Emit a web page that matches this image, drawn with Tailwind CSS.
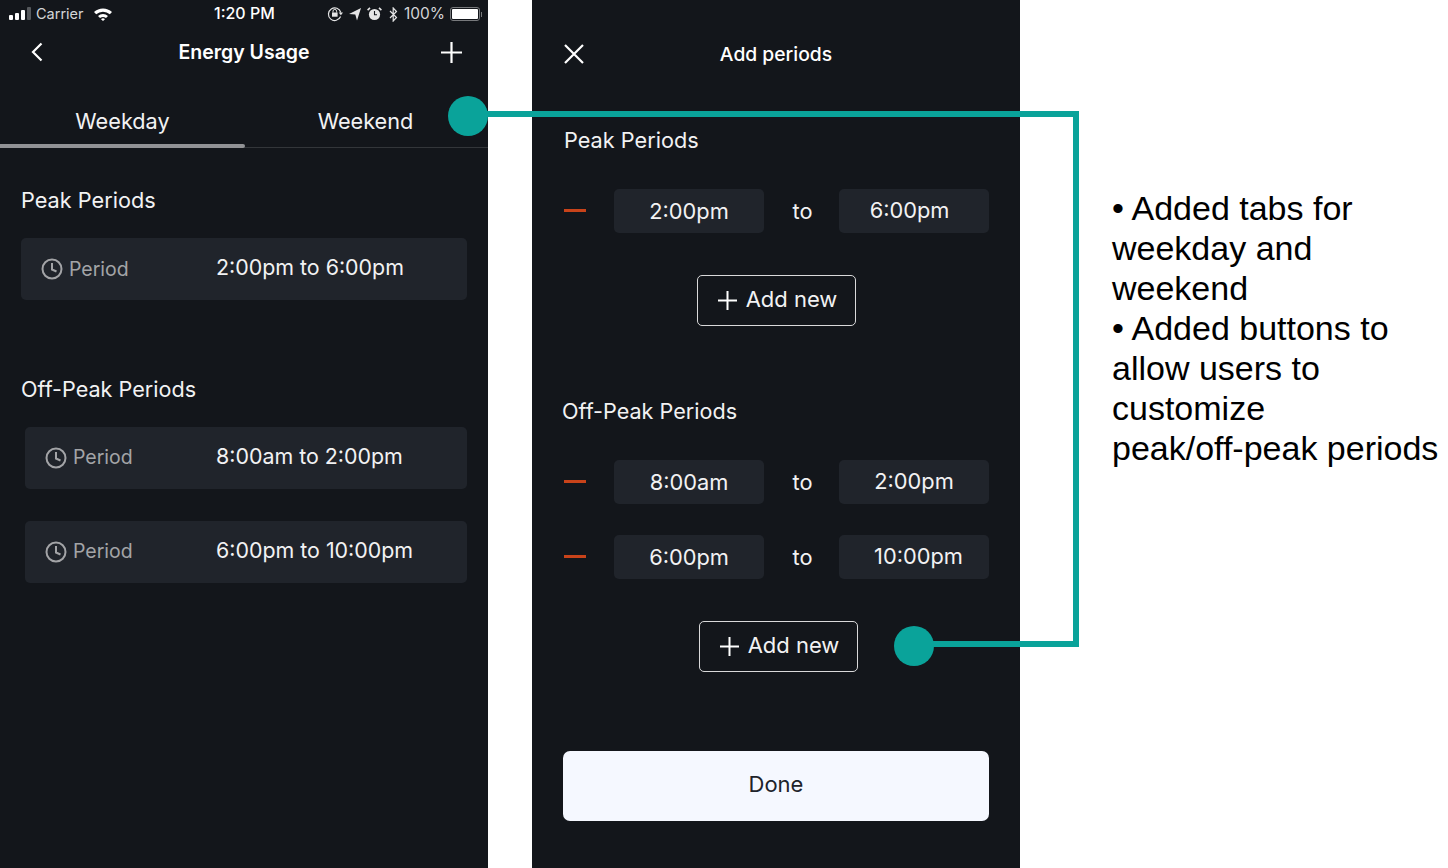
<!DOCTYPE html>
<html lang="en">
<head>
  <meta charset="UTF-8" />
  <title>Energy Usage</title>
  <script src="https://cdn.jsdelivr.net/npm/@tailwindcss/browser@4"></script>
</head>
<body class="bg-white font-['Inter','Liberation_Sans',sans-serif] overflow-hidden">
  <div class="relative w-[1448px] h-[868px] flex">

    <!-- Left phone -->
    <section class="w-[488px] h-[868px] bg-[#13161b] text-white shrink-0">
      <!-- Status bar -->
      <div class="relative h-[28px] flex items-center pl-[9px] pr-[6px] text-[#d4d5d7]">
        <svg width="22" height="14" viewBox="0 0 22 14" class="shrink-0 mr-[5px]">
          <rect x="0" y="8" width="4" height="5" rx="1" fill="#fff"/>
          <rect x="6" y="6" width="4" height="7" rx="1" fill="#fff"/>
          <rect x="12" y="3" width="4" height="10" rx="1" fill="#fff"/>
          <rect x="18" y="0" width="4" height="13" rx="1" fill="#55585c"/>
        </svg>
        <span class="text-[14.5px] leading-none">Carrier</span>
        <svg width="20" height="14" viewBox="0 0 20 14" class="ml-[9px]">
          <path d="M1 5 A13 13 0 0 1 19 5 L16.8 7.3 A10 10 0 0 0 3.2 7.3 Z" fill="#fff"/>
          <path d="M5 9 A7.5 7.5 0 0 1 15 9 L13 11 A5 5 0 0 0 7 11 Z" fill="#fff"/>
          <path d="M8 12.2 A3 3 0 0 1 12 12.2 L10 14 Z" fill="#fff"/>
        </svg>
        <span class="absolute left-[214px] top-[3px] text-[16px] leading-[20px] font-medium text-white">1:20 PM</span>
        <div class="ml-auto flex items-center">
          <svg width="17" height="16" viewBox="0 0 17 16" fill="none" stroke="#e5e5e6" class="mr-[5px]">
            <path d="M13.6 10.5 A6.3 6.3 0 1 1 13.8 6.5" stroke-width="1.2"/>
            <path d="M11.7 6.6 L16 6.6 L13.9 9.2 Z" fill="#e5e5e6" stroke="none"/>
            <rect x="5" y="6.5" width="5.6" height="4.2" fill="#e5e5e6" stroke="none"/>
            <path d="M6 6.5 V5.2 A1.8 1.8 0 0 1 9.6 5.2 V6.5" stroke-width="1"/>
          </svg>
          <svg width="12" height="13" viewBox="0 0 12 13" class="mr-[6px]"><path d="M0 6 L12 0 L8 12.5 L6.3 6.4 Z" fill="#e5e5e6"/></svg>
          <svg width="15" height="14" viewBox="0 0 15 14" class="mr-[7px]">
            <circle cx="7.5" cy="7.5" r="5.6" fill="#e5e5e6"/>
            <path d="M7.5 4 V7.8 H10" stroke="#13161b" stroke-width="1.1" fill="none"/>
            <path d="M0.6 3.2 L3 0.9 M14.4 3.2 L12 0.9" stroke="#e5e5e6" stroke-width="1.6"/>
          </svg>
          <svg width="9" height="15" viewBox="0 0 9 15" fill="none" stroke="#e5e5e6" stroke-width="1.2" class="mr-[6px]"><path d="M1 4 L7.5 10.5 L4.2 14 V1 L7.5 4.5 L1 11"/></svg>
          <span class="text-[15.5px] leading-none mr-[5px]">100%</span>
          <div class="w-[30px] h-[14px] border border-[#77797c] rounded-[3px] p-[1px]"><div class="w-full h-full bg-white rounded-[1px]"></div></div>
          <div class="w-[1px] h-[5px] bg-[#77797c] ml-[1px]"></div>
        </div>
      </div>
      <!-- Nav -->
      <div class="relative h-[48px] flex items-center justify-between pl-[31px] pr-[26px]">
        <svg width="12" height="20" viewBox="0 0 12 20" fill="none" stroke="#fff" stroke-width="2.2"><path d="M10.5 1.5 L2 10 L10.5 18.5"/></svg>
        <h1 class="absolute left-0 w-[488px] text-center text-[19.5px] font-semibold leading-none mt-[1px]">Energy Usage</h1>
        <svg width="21" height="21" viewBox="0 0 21 21" stroke="#fff" stroke-width="2.2"><path d="M10.5 0 V21 M0 10.5 H21"/></svg>
      </div>
      <!-- Tabs -->
      <div class="mt-[20px] h-[52px] flex border-b border-[#33363a]">
        <div class="relative w-[245px] text-center text-[21.7px] leading-[50px] text-[#f2f2f3]">Weekday
          <div class="absolute left-0 right-0 bottom-[-1px] h-[4px] rounded-r-[2px] bg-[#919295]"></div>
        </div>
        <div class="w-[241px] text-center text-[21.7px] leading-[50px] text-[#f2f2f3]">Weekend</div>
      </div>

      <h2 class="mt-[38px] ml-[21px] text-[21.7px] leading-[28px] text-[#f2f2f3]">Peak Periods</h2>
      <div class="mt-[24px] ml-[21px] w-[446px] h-[62px] bg-[#20242b] rounded-[5px] flex items-center pl-[20px]">
        <svg width="22" height="22" viewBox="0 0 22 22" fill="none" stroke="#a3a4a7" stroke-width="2" class="mr-[6px]"><circle cx="11" cy="11" r="9.5"/><path d="M11 5 V11.5 L15.5 13.5"/></svg>
        <span class="w-[147px] text-[19.5px] text-[#a3a4a7] mt-[1px]">Period</span>
        <span class="text-[21.4px] text-[#f2f2f3] -mt-[3px]">2:00pm to 6:00pm</span>
      </div>

      <h2 class="mt-[75px] ml-[21px] text-[21.6px] leading-[28px] text-[#f2f2f3]">Off-Peak Periods</h2>
      <div class="mt-[24px] ml-[25px] w-[442px] h-[62px] bg-[#20242b] rounded-[5px] flex items-center pl-[20px]">
        <svg width="22" height="22" viewBox="0 0 22 22" fill="none" stroke="#a3a4a7" stroke-width="2" class="-mt-[1px] mr-[6px]"><circle cx="11" cy="11" r="9.5"/><path d="M11 5 V11.5 L15.5 13.5"/></svg>
        <span class="w-[143px] text-[19.5px] text-[#a3a4a7]">Period</span>
        <span class="text-[21.4px] text-[#f2f2f3] -mt-[3px]">8:00am to 2:00pm</span>
      </div>
      <div class="mt-[32px] ml-[25px] w-[442px] h-[62px] bg-[#20242b] rounded-[5px] flex items-center pl-[20px]">
        <svg width="22" height="22" viewBox="0 0 22 22" fill="none" stroke="#a3a4a7" stroke-width="2" class="-mt-[1px] mr-[6px]"><circle cx="11" cy="11" r="9.5"/><path d="M11 5 V11.5 L15.5 13.5"/></svg>
        <span class="w-[143px] text-[19.5px] text-[#a3a4a7]">Period</span>
        <span class="text-[21.4px] text-[#f2f2f3] -mt-[4px]">6:00pm to 10:00pm</span>
      </div>
    </section>

    <!-- Right phone -->
    <section class="ml-[44px] w-[488px] h-[868px] bg-[#13161b] text-white shrink-0">
      <div class="relative h-[54px] mt-[27px] flex items-center pl-[32px]">
        <svg width="20" height="20" viewBox="0 0 20 20" stroke="#fff" stroke-width="2.2" class="-mt-[1px]"><path d="M1 1 L19 19 M19 1 L1 19"/></svg>
        <h1 class="absolute left-0 w-[488px] text-center text-[19.3px] font-medium leading-none mt-[1px]">Add periods</h1>
      </div>
      <h2 class="mt-[45px] ml-[32px] text-[21.7px] leading-[28px] text-[#f2f2f3]">Peak Periods</h2>

      <div class="mt-[35px] flex items-center pl-[32px] h-[44px]">
        <div class="w-[22px] h-[3px] bg-[#c8431a] -mt-[1px]"></div>
        <div class="ml-[28px] w-[150px] h-[44px] bg-[#20242b] rounded-[5px] flex items-center justify-center text-[21.8px] text-[#f2f2f3]">2:00pm</div>
        <div class="w-[75px] pl-[2px] text-center text-[21.8px] text-[#f2f2f3]">to</div>
        <div class="w-[150px] h-[44px] bg-[#20242b] rounded-[5px] flex items-center justify-center text-[21.8px] text-[#f2f2f3] pb-[2px] pr-[9px]">6:00pm</div>
      </div>
      <div class="mt-[42px] ml-[165px] w-[159px] h-[51px] border-[1.5px] border-[#d9d9da] rounded-[5px] flex items-center justify-center gap-[9px] pl-[2px] text-[22px] text-[#f2f2f3]">
        <svg width="19" height="19" viewBox="0 0 19 19" stroke="#fff" stroke-width="2"><path d="M9.5 0 V19 M0 9.5 H19"/></svg>
        <span class="-mt-[2px]">Add new</span>
      </div>

      <h2 class="mt-[71px] ml-[30px] text-[21.6px] leading-[28px] text-[#f2f2f3]">Off-Peak Periods</h2>

      <div class="mt-[35px] flex items-center pl-[32px] h-[44px]">
        <div class="w-[22px] h-[3px] bg-[#c8431a] -mt-[1px]"></div>
        <div class="ml-[28px] w-[150px] h-[44px] bg-[#20242b] rounded-[5px] flex items-center justify-center text-[21.8px] text-[#f2f2f3]">8:00am</div>
        <div class="w-[75px] pl-[2px] text-center text-[21.8px] text-[#f2f2f3]">to</div>
        <div class="w-[150px] h-[44px] bg-[#20242b] rounded-[5px] flex items-center justify-center text-[21.8px] text-[#f2f2f3] pb-[2px]">2:00pm</div>
      </div>
      <div class="mt-[31px] flex items-center pl-[32px] h-[44px]">
        <div class="w-[22px] h-[3px] bg-[#c8431a] -mt-[1px]"></div>
        <div class="ml-[28px] w-[150px] h-[44px] bg-[#20242b] rounded-[5px] flex items-center justify-center text-[21.8px] text-[#f2f2f3]">6:00pm</div>
        <div class="w-[75px] pl-[2px] text-center text-[21.8px] text-[#f2f2f3]">to</div>
        <div class="w-[150px] h-[44px] bg-[#20242b] rounded-[5px] flex items-center justify-center text-[21.8px] text-[#f2f2f3] pb-[2px] pl-[9px]">10:00pm</div>
      </div>
      <div class="mt-[42px] ml-[167px] w-[159px] h-[51px] border-[1.5px] border-[#d9d9da] rounded-[5px] flex items-center justify-center gap-[9px] pl-[2px] text-[22px] text-[#f2f2f3]">
        <svg width="19" height="19" viewBox="0 0 19 19" stroke="#fff" stroke-width="2"><path d="M9.5 0 V19 M0 9.5 H19"/></svg>
        <span class="-mt-[2px]">Add new</span>
      </div>

      <button class="mt-[79px] ml-[31px] pb-[4px] w-[426px] h-[70px] bg-[#f5f8ff] rounded-[7px] text-[22px] text-[#20232a] block">Done</button>
    </section>

    <!-- Notes -->
    <div class="ml-[92px] mt-[188px] font-['Liberation_Sans',sans-serif] text-[34px] leading-[40px] text-black whitespace-nowrap shrink-0">
      <p>• Added tabs for<br />weekday and<br />weekend</p>
      <p>• Added buttons to<br />allow users to<br />customize<br />peak/off-peak periods</p>
    </div>

    <!-- Callout connector over the panels -->
    <div class="absolute left-[448px] top-[96px] w-[40px] h-[40px] rounded-full bg-[#0aa39a]"></div>
    <div class="absolute left-[486px] top-[111px] w-[593px] h-[6px] bg-[#0aa39a]"></div>
    <div class="absolute left-[1073px] top-[111px] w-[6px] h-[536px] bg-[#0aa39a]"></div>
    <div class="absolute left-[930px] top-[641px] w-[149px] h-[6px] bg-[#0aa39a]"></div>
    <div class="absolute left-[894px] top-[626px] w-[40px] h-[40px] rounded-full bg-[#0aa39a]"></div>
  </div>
</body>
</html>
